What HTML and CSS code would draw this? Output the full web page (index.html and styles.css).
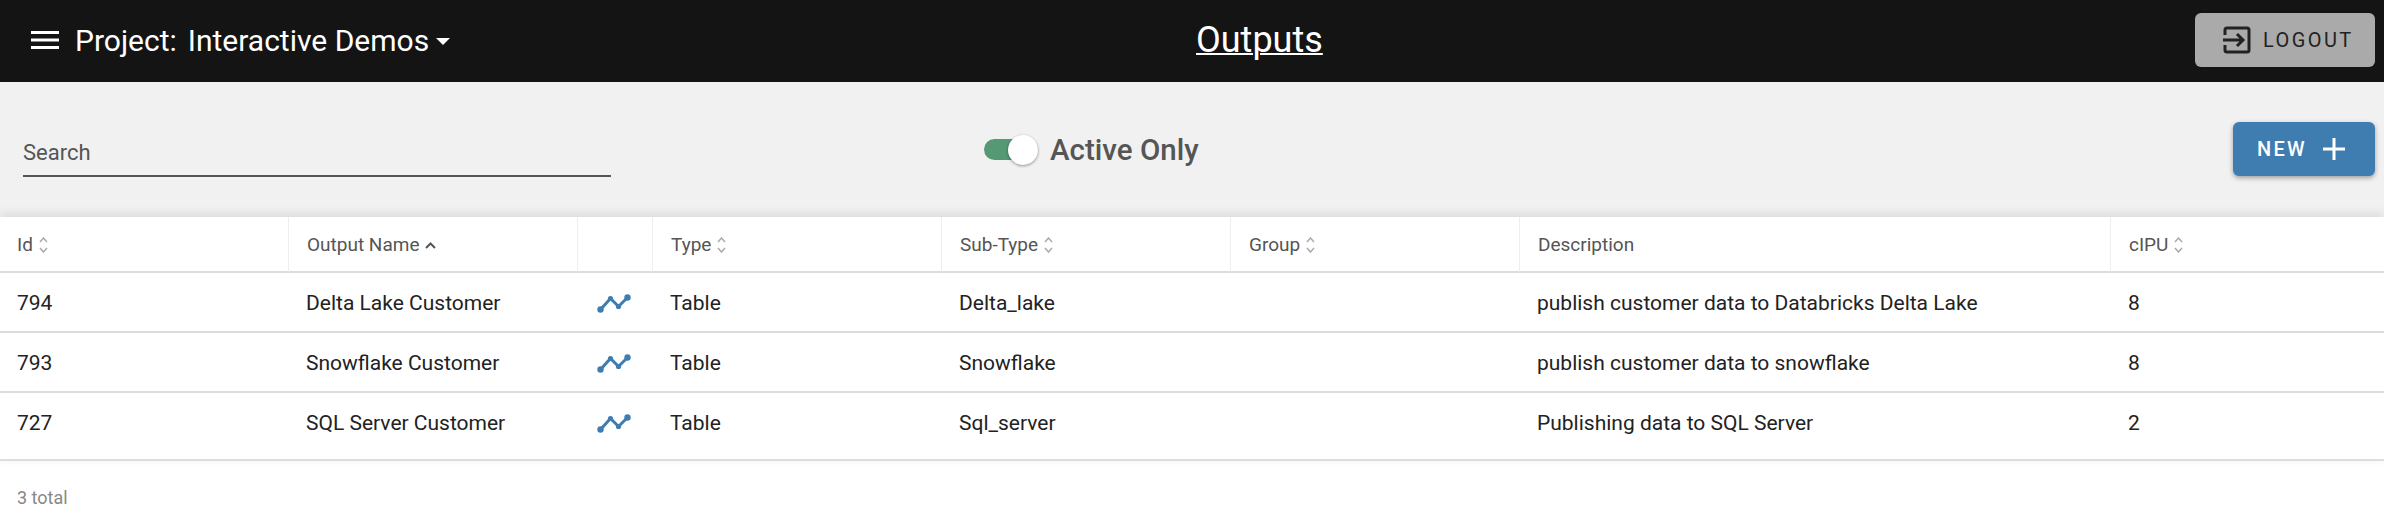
FILE: index.html
```html
<!DOCTYPE html>
<html lang="en">
<head>
    <meta charset="UTF-8">
    <title>Outputs</title>
    <link rel="stylesheet" href="styles.css">
</head>
<body>
    <header class="topbar">
        <div class="project">
            <svg class="menu-icon" width="28" height="18" viewBox="0 0 28 18"><path d="M0 0h28v3H0zM0 7.500h28v3H0zM0 15h28v3H0z"/></svg>
            <span class="project-label">Project:</span>
            <span class="project-name">Interactive Demos</span>
            <span class="caret"></span>
        </div>
        <a class="page-title">Outputs</a>
        <button class="logout">
            <svg width="28" height="28" viewBox="0 0 28 28" fill="none" stroke="#222" stroke-width="3"><path d="M2 9V4a2 2 0 0 1 2-2h20a2 2 0 0 1 2 2v20a2 2 0 0 1-2 2H4a2 2 0 0 1-2-2v-5"/><path d="M0 14h20M14 8l6 6-6 6"/></svg>
            <span>LOGOUT</span>
        </button>
    </header>

    <section class="toolbar">
        <div class="search">Search</div>
        <div class="active-toggle">
            <span class="switch"><span class="thumb"></span></span>
            <span class="switch-label">Active Only</span>
        </div>
        <button class="new-btn">
            <span>NEW</span>
            <svg width="22" height="22" viewBox="0 0 22 22" fill="#fff"><path d="M9.500 0h3v9.500H22v3h-9.500V22h-3v-9.500H0v-3h9.500z"/></svg>
        </button>
    </section>

    <table class="outputs">
        <colgroup>
            <col class="col-id"><col class="col-name"><col class="col-chart"><col class="col-type">
            <col class="col-sub"><col class="col-group"><col class="col-desc"><col>
        </colgroup>
        <thead>
            <tr>
                <th>Id <svg class="sort" width="9" height="16" viewBox="0 0 9 16"><path d="M1 5l3.500-4L8 5M1 11l3.500 4L8 11"/></svg></th>
                <th>Output Name <svg class="sort sort-active" width="11" height="7" viewBox="0 0 11 7"><path d="M1 6l4.500-4.500L10 6"/></svg></th>
                <th></th>
                <th>Type <svg class="sort" width="9" height="16" viewBox="0 0 9 16"><path d="M1 5l3.500-4L8 5M1 11l3.500 4L8 11"/></svg></th>
                <th>Sub-Type <svg class="sort" width="9" height="16" viewBox="0 0 9 16"><path d="M1 5l3.500-4L8 5M1 11l3.500 4L8 11"/></svg></th>
                <th>Group <svg class="sort" width="9" height="16" viewBox="0 0 9 16"><path d="M1 5l3.500-4L8 5M1 11l3.500 4L8 11"/></svg></th>
                <th>Description</th>
                <th>cIPU <svg class="sort" width="9" height="16" viewBox="0 0 9 16"><path d="M1 5l3.500-4L8 5M1 11l3.500 4L8 11"/></svg></th>
            </tr>
        </thead>
        <tbody>
            <tr>
                <td>794</td>
                <td>Delta Lake Customer</td>
                <td class="chart-cell"><svg class="chart" width="34" height="20" viewBox="0 0 34 20"><path d="M3.500 16.500l10-11 8 8 9-9"/><circle cx="3.500" cy="16.500" r="3.200"/><circle cx="13.500" cy="5.500" r="2.600"/><circle cx="21.500" cy="13.500" r="2.600"/><circle cx="30.500" cy="4.500" r="3.200"/></svg></td>
                <td>Table</td>
                <td>Delta_lake</td>
                <td></td>
                <td>publish customer data to Databricks Delta Lake</td>
                <td>8</td>
            </tr>
            <tr>
                <td>793</td>
                <td>Snowflake Customer</td>
                <td class="chart-cell"><svg class="chart" width="34" height="20" viewBox="0 0 34 20"><path d="M3.500 16.500l10-11 8 8 9-9"/><circle cx="3.500" cy="16.500" r="3.200"/><circle cx="13.500" cy="5.500" r="2.600"/><circle cx="21.500" cy="13.500" r="2.600"/><circle cx="30.500" cy="4.500" r="3.200"/></svg></td>
                <td>Table</td>
                <td>Snowflake</td>
                <td></td>
                <td>publish customer data to snowflake</td>
                <td>8</td>
            </tr>
            <tr class="last-row">
                <td>727</td>
                <td>SQL Server Customer</td>
                <td class="chart-cell"><svg class="chart" width="34" height="20" viewBox="0 0 34 20"><path d="M3.500 16.500l10-11 8 8 9-9"/><circle cx="3.500" cy="16.500" r="3.200"/><circle cx="13.500" cy="5.500" r="2.600"/><circle cx="21.500" cy="13.500" r="2.600"/><circle cx="30.500" cy="4.500" r="3.200"/></svg></td>
                <td>Table</td>
                <td>Sql_server</td>
                <td></td>
                <td>Publishing data to SQL Server</td>
                <td>2</td>
            </tr>
        </tbody>
    </table>
    <footer class="total">3 total</footer>
</body>
</html>
```

FILE: styles.css
```css
html, body {
    margin: 0;
    padding: 0;
    height: 516px;
    overflow: hidden;
    background: white;
    font-family: Roboto, Arial, sans-serif;
}

button {
    border: none;
    font-family: inherit;
    display: flex;
    align-items: center;
    height: 54px;
    border-radius: 6px;
}

.topbar {
    height: 82px;
    background: #141414;
    color: white;
    display: flex;
    align-items: center;
    padding: 0 9px 2px 31px;
    box-sizing: border-box;
}

.project {
    width: 1165px;
    display: flex;
    align-items: center;
    font-size: 30px;
}

.menu-icon {
    fill: white;
    margin-right: 16px;
}

.project-label {
    margin-right: 11px;
}

.caret {
    margin-left: 7px;
    margin-top: 3px;
    border-left: 7px solid transparent;
    border-right: 7px solid transparent;
    border-top: 7px solid white;
}

.page-title {
    font-size: 36px;
    text-decoration: underline;
    text-decoration-thickness: 2px;
}

.logout {
    margin-left: auto;
    width: 180px;
    background: #aaa;
    color: #222;
    padding-left: 28px;
    gap: 12px;
    font-size: 20px;
    letter-spacing: 2.400px;
}

.toolbar {
    height: 135px;
    background: #f1f1f1;
    display: flex;
    align-items: center;
    padding: 0 9px 0 23px;
    box-sizing: border-box;
}

.search {
    width: 588px;
    height: 44px;
    margin-top: 11px;
    box-sizing: border-box;
    border-bottom: 2px solid #555;
    color: #555;
    font-size: 22px;
    line-height: 40px;
}

.active-toggle {
    margin-left: 373px;
    display: flex;
    align-items: center;
    gap: 12px;
}

.switch {
    display: flex;
    align-items: center;
    width: 54px;
    height: 21px;
    border-radius: 11px;
    background: #559874;
}

.thumb {
    width: 30px;
    height: 30px;
    margin-left: auto;
    border-radius: 50%;
    background: white;
    box-shadow: 0 1px 3px rgba(0, 0, 0, 0.4);
}

.switch-label {
    font-size: 29.500px;
    font-weight: 500;
    color: #555;
}

.new-btn {
    margin-left: auto;
    margin-bottom: 1px;
    width: 142px;
    background: #3f7cb0;
    color: white;
    padding-left: 24px;
    gap: 16px;
    font-size: 20px;
    font-weight: 500;
    letter-spacing: 2.200px;
    box-shadow: 0 2px 5px rgba(0, 0, 0, 0.35);
}

.outputs {
    position: relative;
    width: 100%;
    table-layout: fixed;
    border-collapse: separate;
    border-spacing: 0;
    background: white;
    box-shadow: 0 -3px 10px rgba(0, 0, 0, 0.1);
    font-size: 21px;
    color: #222;
}

.col-id { width: 288px; }
.col-name { width: 289px; }
.col-chart { width: 75px; }
.col-type { width: 289px; }
.col-sub { width: 289px; }
.col-group { width: 289px; }
.col-desc { width: 591px; }

th {
    height: 56px;
    padding: 0 18px;
    box-sizing: border-box;
    border-bottom: 2px solid #ddd;
    font-size: 19px;
    font-weight: 400;
    color: #555;
    text-align: left;
    white-space: nowrap;
}

th:not(:first-child) {
    border-left: 1px solid #eee;
}

th:first-child, td:first-child {
    padding-left: 17px;
}

td {
    height: 60px;
    padding: 2px 18px 0;
    box-sizing: border-box;
    border-bottom: 2px solid #ddd;
    white-space: nowrap;
}

.last-row td {
    height: 68px;
    padding-bottom: 8px;
}

.sort {
    fill: none;
    stroke: #aaa;
    stroke-width: 1.500;
    vertical-align: -2px;
    margin-left: 1px;
}

.sort-active {
    stroke: #555;
    stroke-width: 2;
    vertical-align: 2px;
}

.chart-cell {
    padding: 2px 0 0 20px;
    line-height: 0;
}

.chart {
    stroke: #3f7cb0;
    stroke-width: 3;
    fill: #3f7cb0;
}

.chart path {
    fill: none;
}

.chart circle {
    stroke: none;
}

.total {
    padding: 26px 17px;
    font-size: 18px;
    color: #888;
}
```
